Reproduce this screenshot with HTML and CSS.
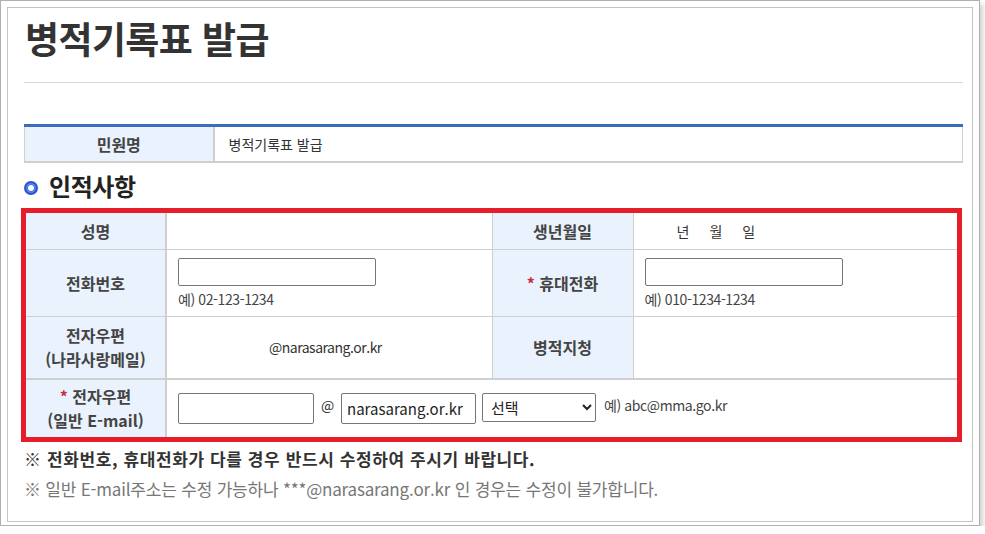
FILE: index.html
```html
<!DOCTYPE html>
<html lang="ko">
<head>
<meta charset="utf-8">
<title>병적기록표 발급</title>
<link rel="stylesheet" href="styles.css">
</head>
<body>
<div class="frame">
  <div class="inner">
    <h1 class="page-title">병적기록표 발급</h1>

    <table class="tbl-top">
      <colgroup><col class="c-th"><col></colgroup>
      <tr>
        <th>민원명</th>
        <td>병적기록표 발급</td>
      </tr>
    </table>

    <h2 class="sec-title">
      <svg class="sec-icon" width="14" height="14" viewBox="0 0 14 14">
        <circle cx="7" cy="7" r="5" fill="none" stroke="#2c55cf" stroke-width="4"/>
        <circle cx="7" cy="7" r="4.2" fill="none" stroke="#5d8ef0" stroke-width="1.2"/>
      </svg>
      인적사항
    </h2>

    <div class="highlight">
      <table class="tbl-form">
        <colgroup>
          <col class="c1"><col class="c2"><col class="c3"><col class="c4">
        </colgroup>
        <tr class="r1">
          <th>성명</th>
          <td></td>
          <th>생년월일</th>
          <td class="birth"><span>년</span><span>월</span><span>일</span></td>
        </tr>
        <tr class="r2">
          <th>전화번호</th>
          <td>
            <input type="text" class="inp-phone">
            <div class="hint">예) 02-123-1234</div>
          </td>
          <th><span class="req">*</span> 휴대전화</th>
          <td>
            <input type="text" class="inp-phone">
            <div class="hint">예) 010-1234-1234</div>
          </td>
        </tr>
        <tr class="r3">
          <th>전자우편<br>(나라사랑메일)</th>
          <td class="mil-mail">@narasarang.or.kr</td>
          <th>병적지청</th>
          <td></td>
        </tr>
        <tr class="r4">
          <th><span class="req">*</span> 전자우편<br>(일반 E-mail)</th>
          <td colspan="3">
            <div class="mail-row">
              <input type="text" class="inp-id">
              <span class="at">@</span>
              <input type="text" class="inp-domain" value="narasarang.or.kr">
              <select class="sel-domain"><option>선택</option></select>
              <span class="hint-inline">예) abc@mma.go.kr</span>
            </div>
          </td>
        </tr>
      </table>
    </div>

    <p class="note-bold">※ 전화번호, 휴대전화가 다를 경우 반드시 수정하여 주시기 바랍니다.</p>
    <p class="note">※ 일반 E-mail주소는 수정 가능하나 ***@narasarang.or.kr 인 경우는 수정이 불가합니다.</p>
  </div>
</div>
</body>
</html>
```

FILE: styles.css
```css
* { box-sizing: border-box; }

html, body {
  margin: 0;
  padding: 0;
  background: #fff;
}

body {
  font-family: "Noto Sans CJK KR", "Noto Sans", sans-serif;
  color: #333;
}

.frame {
  width: 980px;
  height: 526px;
  border: 1px solid #b0b0b0;
  padding: 6px 6px 3px 6px;
  box-shadow: 3px 4px 5px rgba(0, 0, 0, 0.18);
  background: #fff;
}

.inner {
  height: 100%;
  border: 1px solid #c4c4c4;
  padding: 0 9px 0 16px;
}

.page-title {
  margin: 10px 0 0;
  padding: 0 0 24px 1px;
  font-size: 37px;
  line-height: 40px;
  font-weight: 700;
  color: #333;
  letter-spacing: -0.6px;
  border-bottom: 1px solid #d7d7dd;
}

/* top table */
.tbl-top {
  margin-top: 41px;
  width: 100%;
  border-collapse: collapse;
  table-layout: fixed;
  border-top: 3px solid #3d6cbf;
}
.tbl-top .c-th { width: 189px; }
.tbl-top th {
  height: 36px;
  background: #e9f2fd;
  border-left: 1px solid #cfcfcf;
  border-right: 2px solid #cfcfcf;
  border-bottom: 2px solid #cfcfcf;
  font-size: 16px;
  font-weight: 700;
  color: #444;
  padding: 0;
}
.tbl-top td {
  border-right: 1px solid #cfcfcf;
  border-bottom: 2px solid #cfcfcf;
  font-size: 14px;
  color: #333;
  padding: 0 0 0 14px;
}

/* section title */
.sec-title {
  margin: 0;
  height: 45px;
  display: flex;
  align-items: center;
  gap: 11px;
  font-size: 24px;
  font-weight: 700;
  color: #222;
  letter-spacing: -0.4px;
  padding-top: 1px;
}
.sec-icon { margin-top: 4px; flex: none; }

/* highlighted form */
.highlight {
  margin-left: -3px;
  width: 941px;
  border: 5px solid #e61e2a;
}

.tbl-form {
  width: 100%;
  border-collapse: collapse;
  table-layout: fixed;
}
.tbl-form .c1 { width: 140px; }
.tbl-form .c2 { width: 326px; }
.tbl-form .c3 { width: 141px; }
.tbl-form .c4 { width: auto; }

.tbl-form th,
.tbl-form td {
  border-bottom: 1px solid #cfcfcf;
  border-left: 1px solid #cfcfcf;
  padding: 0;
}
.tbl-form th {
  background: #e9f2fd;
  font-size: 16px;
  font-weight: 700;
  color: #444;
  line-height: 24px;
  text-align: center;
}
.tbl-form tr > :first-child {
  border-left: none;
  border-right: 2px solid #cfcfcf;
}
.tbl-form td {
  padding-left: 11px;
  font-size: 14px;
  color: #333;
}
.tbl-form .r1 > * { height: 37px; }
.tbl-form .r2 > * { height: 67px; }
.tbl-form .r3 > * { height: 62px; border-bottom: 2px solid #cfcfcf; }
.tbl-form .r4 > * { height: 58px; border-bottom: none; }

.req { color: #c9303f; font-weight: 700; }

.birth { padding-left: 43px !important; }
.birth span { margin-right: 20px; }

.mil-mail {
  padding-left: 102px !important;
  letter-spacing: -0.5px;
}

input, select {
  font-family: "Noto Sans CJK KR", "Noto Sans", sans-serif;
  border: 1px solid #767676;
  border-radius: 2px;
  background: #fff;
  margin: 0;
}

.inp-phone {
  display: block;
  width: 198px;
  height: 28px;
}
.hint {
  margin-top: 4px;
  font-size: 14px;
  line-height: 18px;
  color: #444;
  letter-spacing: -0.4px;
}

.mail-row {
  display: flex;
  align-items: flex-start;
}
.inp-id {
  width: 136px;
  height: 31px;
}
.at {
  width: 27px;
  text-align: center;
  font-size: 14px;
  line-height: 24px;
  color: #333;
}
.inp-domain {
  width: 135px;
  height: 31px;
  padding: 0 5px;
  font-size: 15px;
  color: #222;
}
.sel-domain {
  margin-left: 6px;
  width: 114px;
  height: 29px;
  font-size: 15px;
  color: #222;
  padding: 0 4px;
}
.hint-inline {
  margin-left: 8px;
  font-size: 14px;
  line-height: 24px;
  color: #444;
  letter-spacing: -0.4px;
}

.note-bold {
  margin: 2px 0 0;
  font-size: 17px;
  line-height: 30px;
  font-weight: 700;
  color: #333;
  letter-spacing: 0.6px;
}
.note {
  margin: 0;
  font-size: 17px;
  line-height: 30px;
  color: #777;
  letter-spacing: -0.2px;
}
```
